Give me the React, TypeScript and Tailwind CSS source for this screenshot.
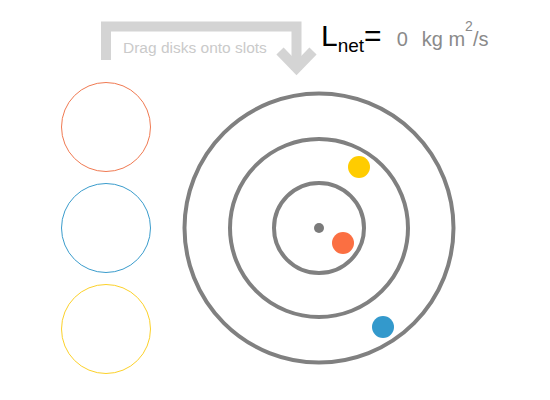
import React from 'react';

const slots = [
  { id: 'orange', color: 'border-[#f07a52]' },
  { id: 'blue', color: 'border-[#3a9ccc]' },
  { id: 'yellow', color: 'border-[#fcd12a]' },
];

const disks = [
  { id: 'yellow', cx: 180, cy: 79, fill: '#ffcc00' },
  { id: 'orange', cx: 164, cy: 155, fill: '#fb6f42' },
  { id: 'blue', cx: 204, cy: 239, fill: '#3399cc' },
];

const DragArrow: React.FC = () => (
  <div className="relative ml-[100px] h-[80px] w-[218px] shrink-0">
    <svg width="218" height="80" viewBox="0 0 218 80" className="block">
      <path
        d="M6 60 V26.5 H196.5 V70"
        fill="none"
        stroke="#d4d4d4"
        strokeWidth="10"
        strokeLinejoin="miter"
      />
      <path
        d="M180 51 L196.5 68 L213 51"
        fill="none"
        stroke="#d4d4d4"
        strokeWidth="10"
        strokeLinejoin="miter"
      />
    </svg>
    <span className="absolute left-[23px] top-[40px] text-[15.5px] leading-none text-[#cacaca] whitespace-nowrap font-['Liberation_Sans',Arial,sans-serif]">
      Drag disks onto slots
    </span>
  </div>
);

const Formula: React.FC = () => (
  <div className="ml-[3px] mt-[21px] flex items-baseline whitespace-nowrap leading-none font-['Liberation_Sans',Arial,sans-serif]">
    <span className="text-[30px] text-black">L</span>
    <span className="relative top-[6px] text-[19px] text-black">net</span>
    <span className="text-[30px] text-black">=</span>
    <span className="ml-[15px] text-[20px] text-[#8a8a8a]">0</span>
    <span className="ml-[14px] text-[20px] text-[#8a8a8a]">
      kg m<span className="relative -top-[15px] text-[14px]">2</span>/s
    </span>
  </div>
);

const Orbits: React.FC = () => (
  <svg width="280" height="280" viewBox="0 0 280 280" className="block shrink-0">
    <g fill="none" stroke="#808080" strokeWidth="4">
      <circle cx="140" cy="140" r="134.5" />
      <circle cx="140" cy="140" r="89" />
      <circle cx="140" cy="140" r="45" />
    </g>
    <circle cx="140" cy="140" r="5" fill="#7a7a7a" />
    {disks.map((d) => (
      <circle key={d.id} cx={d.cx} cy={d.cy} r="11" fill={d.fill} />
    ))}
  </svg>
);

export default function App() {
  return (
    <div className="w-[550px] h-[400px] bg-white overflow-hidden">
      <div className="flex items-start h-[80px]">
        <DragArrow />
        <Formula />
      </div>

      <div className="flex items-start">
        <div className="ml-[61px] mt-[2px] flex flex-col gap-[11px]">
          {slots.map((s) => (
            <div key={s.id} className={`w-[90px] h-[90px] rounded-full border-[1.5px] ${s.color}`} />
          ))}
        </div>
        <div className="ml-[28px] mt-[8px]">
          <Orbits />
        </div>
      </div>
    </div>
  );
}
